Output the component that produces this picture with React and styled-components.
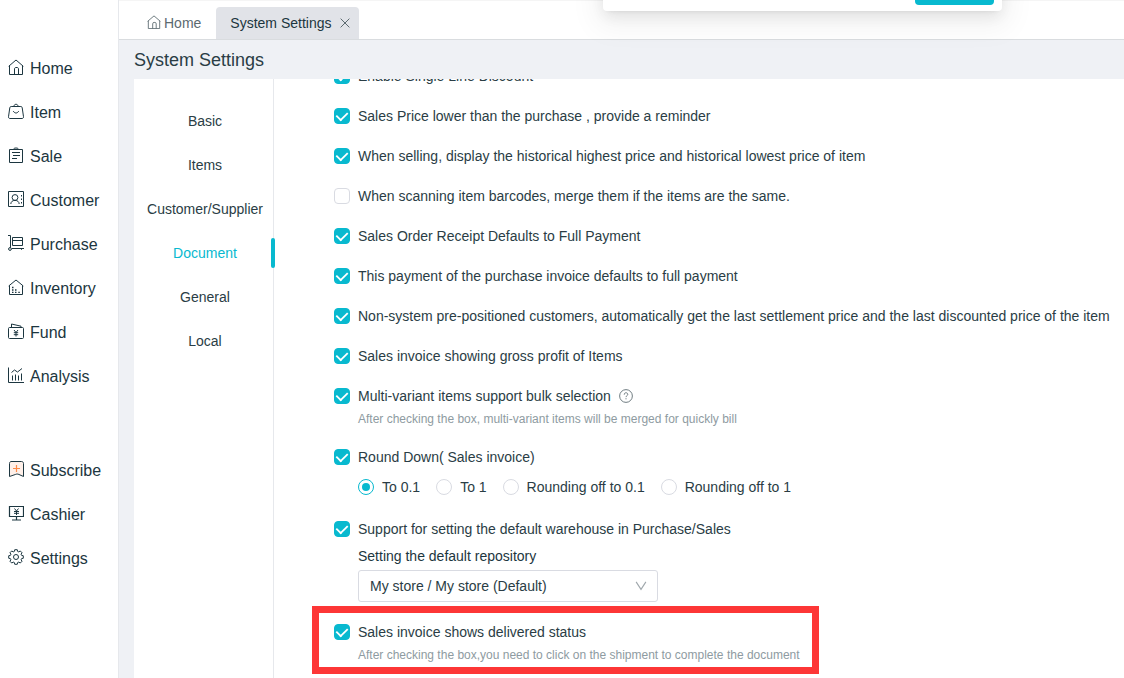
import React, { useState } from 'react';
import styled, { createGlobalStyle } from 'styled-components';

const vars = {
  primary: '#08b9cf',
  text: '#2a3d45',
  dark: '#1c3640',
  grey: '#5c6a70',
  muted: '#8e9ba1',
  border: '#d9dbe2',
  line: '#e6e8ec',
  page: '#eff1f5',
  font: '"Liberation Sans", Arial, sans-serif',
};

const GlobalStyle = createGlobalStyle`
  * {
    box-sizing: border-box;
  }
  body {
    margin: 0;
    color: ${vars.text};
    background: ${vars.page};
    font-family: ${vars.font};
    font-size: 14px;
    line-height: 22px;
  }
  button, input, select {
    margin: 0;
    color: inherit;
    font: inherit;
  }
`;

const Layout = styled.div`
  display: grid;
  grid-template-columns: 119px minmax(0, 1fr);
  height: 100vh;
  overflow: hidden;
`;

const Sidebar = styled.nav`
  display: flex;
  flex-direction: column;
  gap: 50px;
  padding-top: 47px;
  background: #fff;
  border-right: 1px solid ${vars.line};
`;

const MenuGroup = styled.div`
  display: flex;
  flex-direction: column;
`;

const Icon = styled.svg`
  flex: none;
  width: ${props => props.$size}px;
  height: ${props => props.$size}px;
  fill: none;
  stroke: currentColor;
  stroke-width: 1;
`;

const MenuLink = styled.a`
  display: flex;
  align-items: center;
  gap: 6px;
  height: 44px;
  padding-left: 8px;
  color: ${vars.dark};
  font-size: 16px;
  text-decoration: none;

  ${Icon} {
    margin-bottom: 4px;
  }
`;

const Main = styled.main`
  display: flex;
  flex-direction: column;
  min-width: 0;
  min-height: 0;
`;

const TabBar = styled.header`
  display: flex;
  flex: none;
  align-items: flex-end;
  height: 40px;
  padding-left: 14px;
  background: #fff;
  border-top: 1px solid #f5f5f5;
  border-bottom: 1px solid #d9dcdf;
`;

const Tab = styled.div`
  display: flex;
  align-items: center;
  height: 32px;
  padding: 0 ${props => (props.$active ? '9px' : '15px')} 0 14px;
  border-radius: 4px 4px 0 0;
  color: ${props => (props.$active ? vars.dark : vars.grey)};
  background: ${props => (props.$active ? '#e1e3e8' : 'transparent')};
`;

const TabButton = styled.button`
  display: flex;
  align-items: center;
  gap: 3px;
  padding: 0;
  border: 0;
  background: none;

  ${Icon} {
    margin-bottom: 2px;
  }
`;

const CloseButton = styled(TabButton)`
  margin-left: 8px;
  color: ${vars.grey};

  ${Icon} {
    margin: 0;
  }
`;

const Title = styled.h1`
  flex: none;
  margin: 0;
  padding: 1px 0 0 15px;
  font-size: 18px;
  font-weight: 400;
  line-height: 38px;
`;

const Panel = styled.section`
  display: grid;
  flex: 1;
  grid-template-columns: 140px minmax(0, 1fr);
  min-height: 0;
  margin-left: 15px;
  background: #fff;
`;

const SubNav = styled.nav`
  display: flex;
  flex-direction: column;
  padding-top: 20px;
  border-right: 1px solid ${vars.line};
`;

const SubLink = styled.a`
  position: relative;
  padding-left: 3px;
  color: ${props => (props.$active ? vars.primary : vars.text)};
  line-height: 44px;
  text-align: center;
  text-decoration: none;

  &::after {
    content: '';
    display: ${props => (props.$active ? 'block' : 'none')};
    position: absolute;
    top: 7px;
    right: -2px;
    width: 4px;
    height: 30px;
    border-radius: 2px;
    background: ${vars.primary};
  }
`;

const Scroller = styled.div`
  overflow: hidden;
`;

const SettingList = styled.div`
  display: flex;
  flex-direction: column;
  align-items: flex-start;
  gap: 18px;
  margin-top: -14px;
  padding-left: 60px;
`;

const Setting = styled.div`
  white-space: nowrap;
`;

const Highlight = styled(Setting)`
  margin: -14px 0 0 -22px;
  padding: 8px 12px 3px 15px;
  border: 7px solid #fd3636;
`;

const Row = styled.div`
  display: flex;
  align-items: center;
  gap: 8px;
  color: ${vars.text};

  > ${Icon} {
    color: ${vars.grey};
  }
`;

const Choice = styled.label`
  display: flex;
  align-items: center;
  gap: 8px;
  color: ${vars.text};
`;

const Checkbox = styled.input`
  display: grid;
  place-items: center;
  width: 16px;
  height: 16px;
  border: 1px solid ${vars.border};
  border-radius: 4px;
  background: #fff;
  appearance: none;

  &:checked {
    border-color: ${vars.primary};
    background: ${vars.primary};
  }
  &:checked::after {
    content: '';
    width: 10px;
    height: 6px;
    margin-bottom: 3px;
    border: solid #fff;
    border-width: 0 0 2px 2px;
    transform: rotate(-45deg) scale(0.9);
  }
`;

const Radio = styled.input`
  display: grid;
  place-items: center;
  width: 16px;
  height: 16px;
  border: 1px solid ${vars.border};
  border-radius: 50%;
  background: #fff;
  appearance: none;

  &:checked {
    border-color: ${vars.primary};
  }
  &:checked::after {
    content: '';
    width: 8px;
    height: 8px;
    border-radius: 50%;
    background: ${vars.primary};
  }
`;

const Hint = styled.p`
  margin: 3px 0 0 24px;
  color: ${vars.muted};
  font-size: 12px;
  line-height: 18px;
`;

const RadioGroup = styled.div`
  display: flex;
  gap: 16px;
  margin: 8px 0 0 24px;
  padding-bottom: 2px;
`;

const Field = styled.div`
  display: flex;
  flex-direction: column;
  gap: 3px;
  margin: 5px 0 0 24px;
  color: ${vars.dark};
`;

const SelectBox = styled.div`
  position: relative;
  width: 300px;
  height: 32px;

  ${Icon} {
    position: absolute;
    top: 10px;
    right: 11px;
    color: #a0a8ad;
    pointer-events: none;
  }
`;

const Select = styled.select`
  width: 100%;
  height: 100%;
  padding: 0 30px 0 11px;
  border: 1px solid ${vars.border};
  border-radius: 3px;
  color: ${vars.text};
  background: #fff;
  appearance: none;
`;

const Popup = styled.div`
  position: fixed;
  top: -45px;
  right: 122px;
  display: flex;
  justify-content: flex-end;
  width: 399px;
  padding: 18px 8px 6px;
  border-radius: 4px;
  background: #fff;
  box-shadow: 0 3px 6px -4px rgba(0, 0, 0, .12), 0 6px 16px rgba(0, 0, 0, .08), 0 9px 28px 8px rgba(0, 0, 0, .05);
`;

const PopupButton = styled.button`
  width: 79px;
  height: 32px;
  border: 0;
  border-radius: 4px;
  background: ${vars.primary};
`;

// eight teeth, four points for each
const gear = Array.from({ length: 8 }, (_, i) => [[-16, 5.8], [-10, 7.4], [10, 7.4], [16, 5.8]].map(([turn, r]) => {
  const angle = (i * 45 + turn) * Math.PI / 180;
  return `${(8 + r * Math.cos(angle)).toFixed(2)},${(8 + r * Math.sin(angle)).toFixed(2)}`;
}).join(' ')).join(' ');

const icons = {
  home: <>
    <path d="M.7 7.300 8 1l7.300 6.300M1.500 6.700v8.800h13V6.700" />
    <path d="M6.500 15.500V10c0-.9.5-1.500 1.500-1.500h1c1 0 1.500.6 1.500 1.500v5.500" />
  </>,
  item: <>
    <path d="M3.200 3.500h9.600c.8 0 1.200.4 1.400 1.200l1.300 9c.1 1.100-.4 1.800-1.500 1.800H2C.9 15.500.4 14.800.5 13.700l1.300-9c.2-.8.6-1.200 1.400-1.200Z" />
    <path d="M6 3.300C6 2 6.800 1.300 8 1.300s2 .7 2 2M5.300 8c.6 1.300 1.500 2 2.700 2s2.100-.7 2.700-2" />
  </>,
  sale: <>
    <path d="M1.500 2.500h13v13h-13zM5.500 2.500c0-1 1-1.500 2.500-1.500s2.500.500 2.500 1.500M4 5.500h8M5 8.500h7M4 11.500h5" />
  </>,
  customer: <>
    <path d="M.5.500h15v15H.5z" />
    <circle cx="7" cy="6.500" r="2.900" />
    <path d="M2.800 13c.2-2.200 1.500-3.600 4.200-3.600s4 1.400 4.200 3.600M13.500 4v1.500M13.500 7.500V9M13.500 11v1.500" />
  </>,
  purchase: <>
    <path d="M0 .5h2.500v12.200M4 13.500h12M4.500 2.500h10v8h-10zM4.500 5.500h10M13.500 13v1.800" />
    <circle cx="2" cy="14" r="1.400" />
  </>,
  inventory: <>
    <path d="M.7 7 8 1l7.300 6M1.500 6.500v9h13v-9" />
    <path d="M4 8.500h1.500M4 11h1.500M7 11h1.500M4 13.400h1.500M7 13.400h1.500M10.300 13.400h1.500" strokeWidth="1.300" />
  </>,
  fund: <>
    <path d="M1.500 4.500h13c.6 0 1 .4 1 1v9c0 .6-.4 1-1 1h-13c-.6 0-1-.4-1-1v-9c0-.6.4-1 1-1ZM3.500 4.500V1l9.500 2.200v1.300" />
    <path d="m6 7 2 2.500L10 7M5.800 9.700h4.400M5.800 11.700h4.400M8 9.500v4" />
  </>,
  analysis: <>
    <path d="M.5.500v15H16M4.500 13.500V8.500M7.500 13.500V7.500M10.500 13.500V8.500M13.500 13.500V6.500M3.500 5.500l3-2.500 3 2L14 1.500" />
  </>,
  subscribe: <>
    <path d="M3 .5h10.500c1.200 0 2 .8 2 2v13l-4.500-2c-1.200-.6-2.500-.6-3.700 0l-5.800 2v-13c0-1.200.8-2 1.500-2Z" fill="#fff0e9" />
    <path d="M8.500 4v7M5 7.500h7" stroke="#ff8a47" strokeWidth="1.200" />
  </>,
  cashier: <>
    <path d="M1.500 1.500h14v10h-14zM8.500 11.500v3M4 15h9" strokeWidth="1.200" />
    <path d="m6.500 3.500 2 2.500 2-2.500M6 6.500h5M6 8.300h5M8.500 6v4" />
  </>,
  settings: <>
    <circle cx="8" cy="8" r="2.500" />
    <polygon points={gear} strokeLinejoin="round" />
  </>,
  close: <path d="m1 1 14 14M15 1 1 15" strokeWidth="1.600" />,
  down: <path d="m1.500 2.500 6.500 10 6.500-10" strokeWidth="1.500" />,
  help: <>
    <circle cx="8" cy="8" r="7.300" />
    <path d="M6 6.500C6 5 6.800 4.300 8 4.300s2 .8 2 1.900c0 1.500-2 1.500-2 3.100M8 10.500v1.300" />
  </>,
};

const menu = [
  [
    ['home', 'Home'],
    ['item', 'Item'],
    ['sale', 'Sale'],
    ['customer', 'Customer'],
    ['purchase', 'Purchase'],
    ['inventory', 'Inventory'],
    ['fund', 'Fund'],
    ['analysis', 'Analysis'],
  ],
  [
    ['subscribe', 'Subscribe'],
    ['cashier', 'Cashier'],
    ['settings', 'Settings'],
  ],
];

const sections = ['Basic', 'Items', 'Customer/Supplier', 'Document', 'General', 'Local'];

const options = [
  ['Enable Single Line Discount', true],
  ['Sales Price lower than the purchase , provide a reminder', true],
  ['When selling, display the historical highest price and historical lowest price of item', true],
  ['When scanning item barcodes, merge them if the items are the same.', false],
  ['Sales Order Receipt Defaults to Full Payment', true],
  ['This payment of the purchase invoice defaults to full payment', true],
  ['Non-system pre-positioned customers, automatically get the last settlement price and the last discounted price of the item', true],
  ['Sales invoice showing gross profit of Items', true],
];

const roundings = ['To 0.1', 'To 1', 'Rounding off to 0.1', 'Rounding off to 1'];

function Glyph({ name, size = 16 }) {
  return <Icon viewBox="0 0 16 16" $size={size} aria-hidden="true">{icons[name]}</Icon>;
}

function CheckOption({ label, checked = true }) {
  return (
    <Choice>
      <Checkbox type="checkbox" defaultChecked={checked} />
      {label}
    </Choice>
  );
}

function DocumentSettings() {
  const [rounding, setRounding] = useState('To 0.1');

  return (
    <SettingList>
      {options.map(([label, checked]) => <Setting key={label}>
        <CheckOption label={label} checked={checked} />
      </Setting>)}
      <Setting>
        <Row>
          <CheckOption label="Multi-variant items support bulk selection" />
          <Glyph name="help" size={14} />
        </Row>
        <Hint>After checking the box, multi-variant items will be merged for quickly bill</Hint>
      </Setting>
      <Setting>
        <CheckOption label="Round Down( Sales invoice)" />
        <RadioGroup>
          {roundings.map(el => <Choice key={el}>
            <Radio type="radio" name="rounding" checked={rounding === el} onChange={() => setRounding(el)} />
            {el}
          </Choice>)}
        </RadioGroup>
      </Setting>
      <Setting>
        <CheckOption label="Support for setting the default warehouse in Purchase/Sales" />
        <Field>
          <label htmlFor="repository">Setting the default repository</label>
          <SelectBox>
            <Select id="repository">
              <option>My store / My store (Default)</option>
            </Select>
            <Glyph name="down" size={12} />
          </SelectBox>
        </Field>
      </Setting>
      <Highlight>
        <CheckOption label="Sales invoice shows delivered status" />
        <Hint>After checking the box,you need to click on the shipment to complete the document</Hint>
      </Highlight>
    </SettingList>
  );
}

function App() {
  return (
    <>
      <GlobalStyle />
      <Layout>
        <Sidebar>
          {menu.map((group, index) => <MenuGroup key={index}>
            {group.map(([icon, label]) => <MenuLink key={label} href={`#${icon}`}>
              <Glyph name={icon} />
              {label}
            </MenuLink>)}
          </MenuGroup>)}
        </Sidebar>
        <Main>
          <TabBar>
            <Tab>
              <TabButton type="button">
                <Glyph name="home" size={14} />
                Home
              </TabButton>
            </Tab>
            <Tab $active>
              <TabButton type="button">System Settings</TabButton>
              <CloseButton type="button" aria-label="Close tab">
                <Glyph name="close" size={10} />
              </CloseButton>
            </Tab>
          </TabBar>
          <Title>System Settings</Title>
          <Panel>
            <SubNav>
              {sections.map(el => <SubLink key={el} href={`#${el}`} $active={el === 'Document'}>{el}</SubLink>)}
            </SubNav>
            <Scroller>
              <DocumentSettings />
            </Scroller>
          </Panel>
        </Main>
      </Layout>
      <Popup>
        <PopupButton type="button" aria-label="Confirm" />
      </Popup>
    </>
  );
}

export default App;
